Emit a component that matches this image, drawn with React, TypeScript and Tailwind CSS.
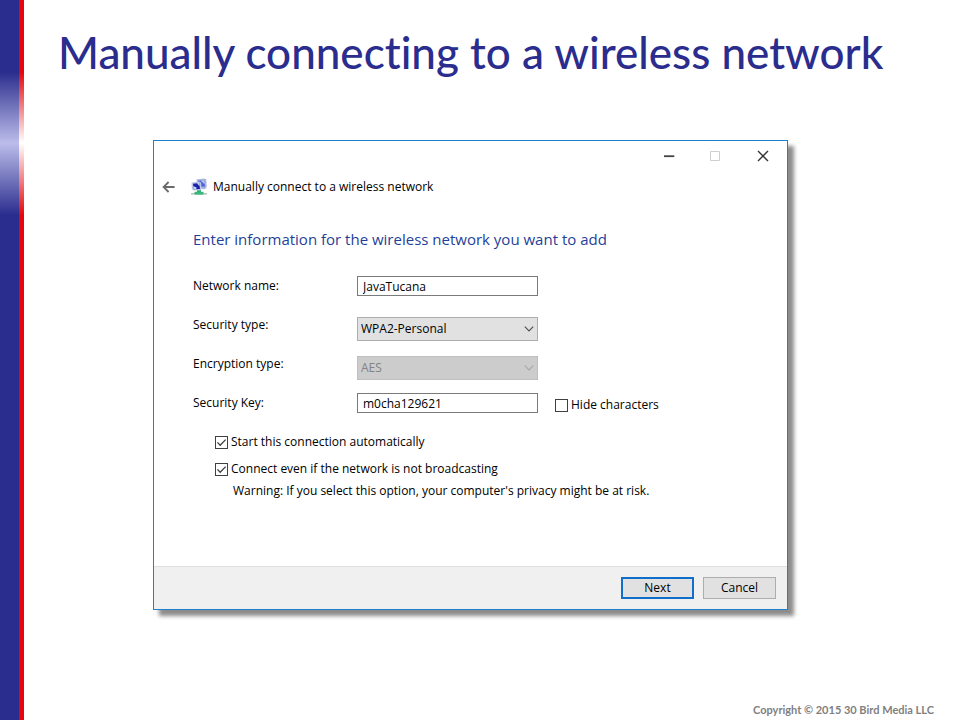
import { useState } from 'react';
import type { ReactNode } from 'react';

// ─── Icons ───────────────────────────────────────────────────────────────────

function BackIcon() {
  return (
    <svg width="14" height="12" viewBox="0 0 14 12" fill="none" stroke="#6b6b6b" strokeWidth="1.8">
      <path d="M12.6 6H1.6M6.6 1 1.6 6l5 5" />
    </svg>
  );
}

function NetworkIcon() {
  return (
    <svg width="16" height="18" viewBox="0 0 16 18">
      <path d="M0 15.2h16v1.3H0z" fill="#a9b8b0" />
      <path d="M6 11h4v3.4H6z" fill="#2fae74" />
      <path d="M3.5 13.8h9v2.8h-9z" fill="#35b87a" />
      <path d="M5.5 1.5 13 .4l2.2.8.6 7.6-1.8 2.4-7.5-.6z" fill="#a9b4da" />
      <path d="m7 2.8 6.2-.8.8 6.6-6.4.4z" fill="#4e62d0" />
      <path d="m9.5 2.5 3.7-.5.5 4.4z" fill="#b3c5f5" />
      <path d="M.6 4.6 8.4 3.5l1.6 1 .8 6.4-1.6 1.7-7.2-.4L.8 11z" fill="#bcc6e4" />
      <path d="m2 5.7 6.2-.8.8 6-6.2.3z" fill="#1c22a8" />
      <path d="m2.4 8.2 3.2 1.2-.4 1.6-2.4.1zM5.8 5.2l2.4-.3.5 3.4z" fill="#c9dbfa" />
    </svg>
  );
}

function MinimizeIcon() {
  return (
    <svg width="12" height="12" viewBox="0 0 12 12">
      <path d="M1 5.3h10.3v1.8H1z" fill="#444" />
    </svg>
  );
}

function MaximizeIcon() {
  return (
    <svg width="12" height="12" viewBox="0 0 12 12" fill="none" stroke="#cfcfcf">
      <path d="M.5 1.5h9v9h-9z" />
    </svg>
  );
}

function CloseIcon() {
  return (
    <svg width="12" height="12" viewBox="0 0 12 12" stroke="#333" strokeWidth="1.4">
      <path d="m1 1 10 10M11 1 1 11" />
    </svg>
  );
}

// ─── Form parts ──────────────────────────────────────────────────────────────

function Field({ id, label, children }: { id: string; label: string; children: ReactNode }) {
  return (
    <div className="flex h-[39px] items-start">
      <label htmlFor={id} className="w-[164px] shrink-0 leading-5">
        {label}
      </label>
      {children}
    </div>
  );
}

type TextBoxProps = { id: string; value: string; onChange: (value: string) => void };

function TextBox({ id, value, onChange }: TextBoxProps) {
  return (
    <input
      id={id}
      type="text"
      value={value}
      onChange={(e) => onChange(e.target.value)}
      className="h-5 w-[181px] border border-[#7a7a7a] bg-white px-[5px] outline-none"
    />
  );
}

type DropDownProps = { id: string; options: string[]; disabled?: boolean };

function DropDown({ id, options, disabled }: DropDownProps) {
  return (
    <div className="relative mt-[2px] w-[181px]">
      <select
        id={id}
        disabled={disabled}
        className="block h-6 w-full appearance-none border border-[#adadad] bg-[#e1e1e1] px-[3px] disabled:border-[#bfbfbf] disabled:bg-[#cccccc] disabled:text-[#838383] disabled:opacity-100"
      >
        {options.map((option) => (
          <option key={option}>{option}</option>
        ))}
      </select>
      <svg
        className="pointer-events-none absolute top-[9px] right-1"
        width="10"
        height="6"
        viewBox="0 0 10 6"
        fill="none"
        stroke={disabled ? '#a8a8a8' : '#505050'}
        strokeWidth="1.2"
      >
        <path d="m.8.7 4.2 4.2L9.2.7" />
      </svg>
    </div>
  );
}

type TickBoxProps = { label: string; checked: boolean; onChange: (checked: boolean) => void };

function TickBox({ label, checked, onChange }: TickBoxProps) {
  return (
    <label className="flex h-5 items-center gap-[3px] leading-5">
      <span className="relative flex">
        <input
          type="checkbox"
          checked={checked}
          onChange={(e) => onChange(e.target.checked)}
          className="size-[13px] appearance-none border border-[#404040] bg-white"
        />
        {checked && (
          <svg
            className="pointer-events-none absolute inset-0"
            width="13"
            height="13"
            viewBox="0 0 13 13"
            fill="none"
            stroke="#404040"
            strokeWidth="1.3"
          >
            <path d="m2.4 6.4 2.8 2.8 5.4-5.6" />
          </svg>
        )}
      </span>
      {label}
    </label>
  );
}

// ─── Dialog window ───────────────────────────────────────────────────────────

function WirelessDialog() {
  const [name, setName] = useState('JavaTucana');
  const [key, setKey] = useState('m0cha129621');
  const [hidden, setHidden] = useState(false);
  const [autoStart, setAutoStart] = useState(true);
  const [notBroadcasting, setNotBroadcasting] = useState(true);

  return (
    <section className="w-full max-w-[635px] border border-[#1f80cc] bg-white font-['Open_Sans','Noto_Sans',sans-serif] text-[12px] text-black shadow-[6px_6px_4px_rgba(0,0,0,0.45)]">
      <div className="flex h-[30px] justify-end pr-px">
        <button type="button" aria-label="Minimize" className="flex w-[47px] items-center justify-center">
          <MinimizeIcon />
        </button>
        <button type="button" aria-label="Maximize" disabled className="flex w-[47px] items-center justify-center">
          <MaximizeIcon />
        </button>
        <button type="button" aria-label="Close" className="flex w-[47px] items-center justify-center">
          <CloseIcon />
        </button>
      </div>

      <div className="flex h-8 items-center pl-2">
        <button type="button" aria-label="Back" className="mr-[15px]">
          <BackIcon />
        </button>
        <NetworkIcon />
        <span className="ml-[6px] leading-5">Manually connect to a wireless network</span>
      </div>

      <form onSubmit={(e) => e.preventDefault()}>
        <div className="px-[39px] pt-6 pb-[65px]">
          <h2 className="mb-[25px] text-[15px] leading-6 text-[#1f3f99]">
            Enter information for the wireless network you want to add
          </h2>

          <Field id="network-name" label="Network name:">
            <TextBox id="network-name" value={name} onChange={setName} />
          </Field>
          <Field id="security-type" label="Security type:">
            <DropDown id="security-type" options={['WPA2-Personal', 'WPA2-Enterprise']} />
          </Field>
          <Field id="encryption-type" label="Encryption type:">
            <DropDown id="encryption-type" options={['AES']} disabled />
          </Field>
          <Field id="security-key" label="Security Key:">
            <TextBox id="security-key" value={key} onChange={setKey} />
            <div className="mt-[2px] ml-[17px]">
              <TickBox label="Hide characters" checked={hidden} onChange={setHidden} />
            </div>
          </Field>

          <div className="flex flex-col gap-[7px] pl-[22px]">
            <TickBox label="Start this connection automatically" checked={autoStart} onChange={setAutoStart} />
            <TickBox
              label="Connect even if the network is not broadcasting"
              checked={notBroadcasting}
              onChange={setNotBroadcasting}
            />
          </div>
          <p className="mt-[2px] pl-10 leading-5">
            Warning: If you select this option, your computer's privacy might be at risk.
          </p>
        </div>

        <div className="flex h-[43px] items-center justify-end gap-[9px] border-t border-[#dfdfdf] bg-[#f0f0f0] pr-[11px]">
          <button type="submit" className="h-[22px] w-[73px] border-2 border-[#0f6fcb] bg-[#e1e1e1] leading-4">
            Next
          </button>
          <button type="button" className="h-[22px] w-[73px] border border-[#adadad] bg-[#e1e1e1] leading-4">
            Cancel
          </button>
        </div>
      </form>
    </section>
  );
}

// ─── Slide ───────────────────────────────────────────────────────────────────

export default function App() {
  return (
    <div className="flex min-h-screen bg-white">
      <div className="w-[19px] shrink-0 bg-[linear-gradient(to_bottom,#2b2d8e_72px,#bcbdea_143px,#2b2d8e_215px)]" />
      <div className="w-[5px] shrink-0 bg-[linear-gradient(to_bottom,#e4060b_72px,#ffffff_143px,#e4060b_215px)]" />

      <div className="flex flex-1 flex-col">
        <h1 className="px-[34px] pt-6 font-['Lato',sans-serif] text-[44px] leading-[56px] font-medium text-[#2b2d8e] [font-variant-ligatures:none]">
          Manually connecting to a wireless network
        </h1>

        <main className="flex flex-1 items-start justify-center pt-[60px] pr-[43px]">
          <WirelessDialog />
        </main>

        <footer className="pr-[26px] pb-[2px] text-right font-['Lato',sans-serif] text-[11px] leading-4 font-bold text-[#7f7f7f]">
          Copyright © 2015 30 Bird Media LLC
        </footer>
      </div>
    </div>
  );
}
